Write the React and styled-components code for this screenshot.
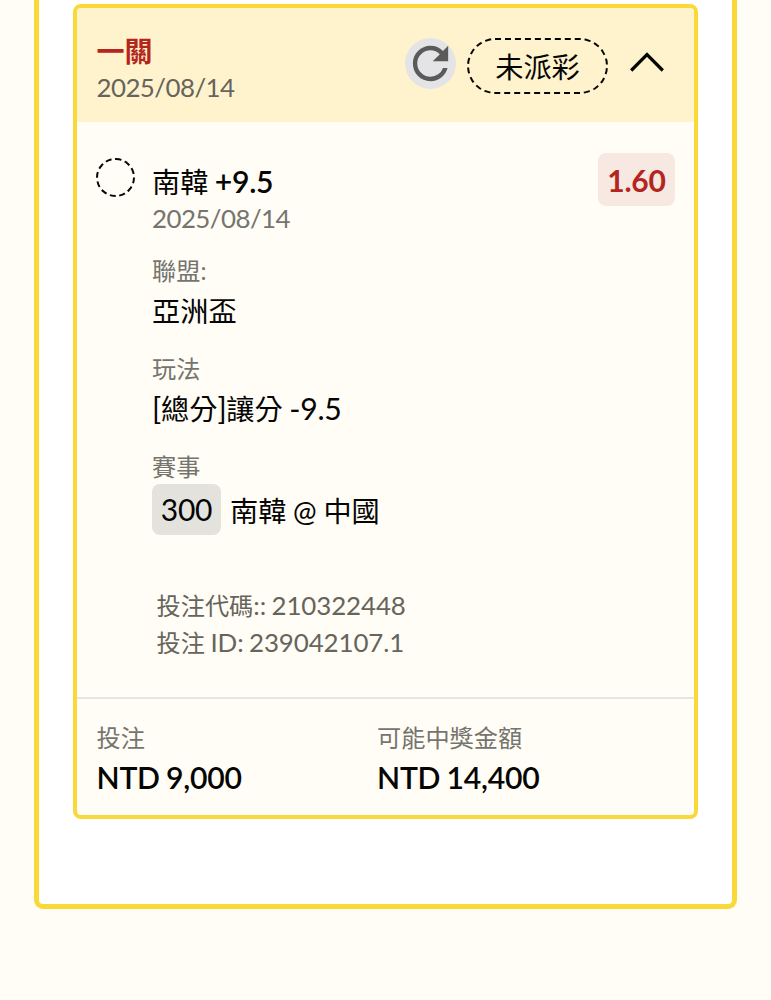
import React from 'react';
import styled, { createGlobalStyle } from 'styled-components';
import { MdRefresh } from 'react-icons/md';

const GlobalStyle = createGlobalStyle`
  * {
    box-sizing: border-box;
  }

  body {
    margin: 0;
    background-color: #FFFDF6;
    font-family: Lato, "Noto Sans CJK TC", sans-serif;
    color: #050504;
  }
`;

const Page = styled.main`
  min-height: 1000px;
  padding: 0 34px;
  overflow: hidden;
`;

const Panel = styled.section`
  height: 909px;
  padding: 4px 34px 0;
  background-color: #FFFFFF;
  border: 5px solid #F9D838;
  border-top: none;
  border-radius: 0 0 9px 9px;
`;

const Ticket = styled.article`
  height: 815px;
  border: 4px solid #F9D838;
  border-radius: 8px;
  background-color: #FFFDF5;
  overflow: hidden;
`;

const Header = styled.header`
  display: flex;
  height: 114px;
  padding: 24.5px 30px 0 19.5px;
  background-color: #FFF3CD;
`;

const HeaderText = styled.div`
  flex: 1;
`;

const Title = styled.h1`
  margin: 0 0 -1px;
  font-size: 28px;
  font-weight: 700;
  line-height: 37px;
  color: #B3261E;
`;

const Small = styled.div`
  font-size: 24.2px;
  line-height: 37px;
  white-space: nowrap;
  color: ${({ $dark }) => ($dark ? '#66645C' : '#75746E')};
`;

const Value = styled.div`
  font-size: 28.2px;
  line-height: 44px;
  white-space: nowrap;
  word-spacing: -0.5px;
`;

const Latin = styled.span`
  font-size: 1.07em;
  line-height: 0;
  letter-spacing: ${({ $tight }) => ($tight ? '-0.55px' : '-0.25px')};
  word-spacing: -1px;
  font-weight: ${({ $bold }) => ($bold ? 600 : 'inherit')};
`;

const RefreshButton = styled.button`
  display: flex;
  align-items: center;
  justify-content: center;
  width: 51px;
  height: 51px;
  margin: 5.5px 11px 0 0;
  padding: 0;
  border: none;
  border-radius: 50%;
  background-color: #E4E4E6;
  color: #5A5A5A;

  svg {
    flex: none;
  }
`;

const Status = styled.div`
  width: 141px;
  height: 56px;
  margin: 5.5px 22px 0 0;
  border: 2px dashed #050504;
  border-radius: 28px;
  font-size: 28.2px;
  line-height: 54px;
  text-align: center;
`;

const Chevron = styled.svg`
  width: 34px;
  height: 20px;
  margin-top: 19.5px;
`;

const Body = styled.div`
  display: flex;
  height: 575px;
  padding: 31px 19px 0;
`;

const Marker = styled.div`
  width: 39px;
  height: 39px;
  margin: 5px 17px 0 0;
  border: 2px dashed #050504;
  border-radius: 50%;
`;

const Details = styled.div`
  flex: 1;
  padding-top: 10.5px;
`;

const Summary = styled.div`
  height: 71.5px;

  ${Value} {
    line-height: 36px;
  }
`;

const Field = styled.div`
  margin-top: 16.9px;
`;

const Match = styled.div`
  display: flex;
  align-items: center;
  gap: 9px;
  margin-top: -1px;

  ${Value} {
    padding-top: 3px;
  }
`;

const MatchCode = styled.span`
  width: 69px;
  height: 51px;
  border-radius: 8px;
  background-color: #E3E2DD;
  font-size: 30px;
  letter-spacing: -0.2px;
  line-height: 51px;
  text-align: center;
`;

const Codes = styled.div`
  margin: 52px 0 0 4.5px;

  ${Latin} {
    letter-spacing: -0.1px;
  }
`;

const Odds = styled.div`
  width: 77px;
  height: 53px;
  border-radius: 8px;
  background-color: #F8E8E2;
  color: #B3261E;
  font-size: 30px;
  font-weight: 700;
  letter-spacing: -0.2px;
  line-height: 54px;
  text-align: center;
`;

const Footer = styled.footer`
  display: grid;
  grid-template-columns: 280.5px 1fr;
  padding: 20px 20px 0 19.5px;
  border-top: 2px solid #E6E5DF;
`;

const fields = [
  { label: '聯盟:', value: '亞洲盃' },
  { label: '玩法', value: <><Latin>[</Latin>總分<Latin>]</Latin>讓分<Latin> -9.5</Latin></> },
];

const codes = [
  { label: '投注代碼', value: ':: 210322448' },
  { label: '投注', value: ' ID: 239042107.1' },
];

const amounts = [
  { label: '投注', value: 'NTD 9,000' },
  { label: '可能中獎金額', value: 'NTD 14,400' },
];

const App = () => (
  <>
    <GlobalStyle />
    <Page>
      <Panel>
        <Ticket>
          <Header>
            <HeaderText>
              <Title>一關</Title>
              <Small $dark><Latin $tight>2025/08/14</Latin></Small>
            </HeaderText>
            <RefreshButton aria-label="refresh">
              <MdRefresh size={53} />
            </RefreshButton>
            <Status>未派彩</Status>
            <Chevron viewBox="0 0 34 20" fill="none" stroke="#050504" strokeWidth="3.2">
              <path d="M1.2 18.5 17 2.6l15.8 15.9" />
            </Chevron>
          </Header>
          <Body>
            <Marker />
            <Details>
              <Summary>
                <Value>南韓<Latin $bold> +9.5</Latin></Value>
                <Small><Latin $tight>2025/08/14</Latin></Small>
              </Summary>
              {fields.map((field) => (
                <Field key={field.label}>
                  <Small>{field.label}</Small>
                  <Value>{field.value}</Value>
                </Field>
              ))}
              <Field>
                <Small>賽事</Small>
                <Match>
                  <MatchCode>300</MatchCode>
                  <Value>南韓 @ 中國</Value>
                </Match>
              </Field>
              <Codes>
                {codes.map((code) => (
                  <Small key={code.label} $dark>
                    {code.label}
                    <Latin>{code.value}</Latin>
                  </Small>
                ))}
              </Codes>
            </Details>
            <Odds>1.60</Odds>
          </Body>
          <Footer>
            {amounts.map((amount) => (
              <div key={amount.label}>
                <Small>{amount.label}</Small>
                <Value><Latin $bold>{amount.value}</Latin></Value>
              </div>
            ))}
          </Footer>
        </Ticket>
      </Panel>
    </Page>
  </>
);

export default App;
